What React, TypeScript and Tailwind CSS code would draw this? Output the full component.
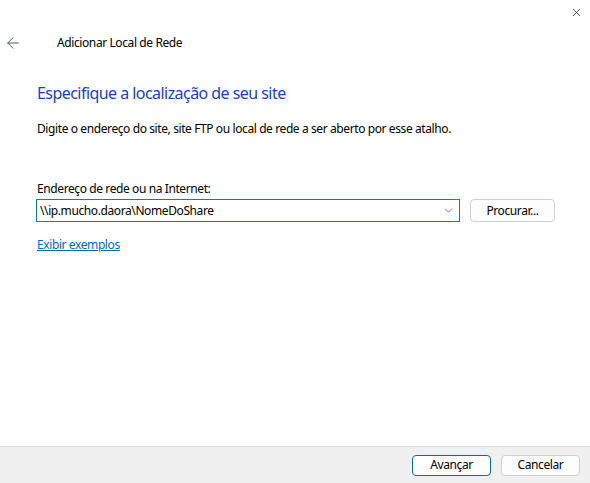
import { ArrowLeft, ChevronDown, X } from "lucide-react";

export default function App() {
  return (
    <div
      className="w-[590px] h-[483px] bg-white flex flex-col text-[12px] tracking-[-0.4px] text-black overflow-hidden"
      style={{ fontFamily: '"Noto Sans", "Open Sans", sans-serif' }}
    >
      {/* title bar */}
      <div className="h-[25px] flex justify-end items-start pt-[6px] pr-[7px]">
        <X size={13} strokeWidth={1.2} className="text-black" />
      </div>

      {/* header with back arrow */}
      <div className="h-[36px] flex items-center">
        <ArrowLeft size={18} strokeWidth={1.3} className="ml-[4px] text-gray-600" />
        <span className="ml-[35px] leading-none">Adicionar Local de Rede</span>
      </div>

      <div className="flex-1 flex flex-col pl-[37px]">
        <h1 className="mt-[21px] text-[16px] tracking-[-0.55px] leading-[22px] text-[#1c3fb7]">
          Especifique a localização de seu site
        </h1>
        <p className="mt-[17px] leading-[16px]">
          Digite o endereço do site, site FTP ou local de rede a ser aberto por esse atalho.
        </p>

        <label className="mt-[44px] leading-[16px]">Endereço de rede ou na Internet:</label>
        <div className="mt-[2px] flex items-center gap-[10px]">
          <div className="w-[424px] h-[23px] -ml-[1px] border border-[#0078d4] flex items-center pl-[3px] pr-[4px]">
            <span className="flex-1 leading-none">\\ip.mucho.daora\NomeDoShare</span>
            <ChevronDown size={13} strokeWidth={1.3} className="text-gray-700" />
          </div>
          <button className="w-[85px] h-[23px] border border-[#d0d0d0] rounded-[4px] bg-[#fdfdfd] leading-none">
            Procurar...
          </button>
        </div>

        <a className="mt-[15px] self-start text-[#0066cc] underline leading-[16px]">Exibir exemplos</a>
      </div>

      {/* footer */}
      <div className="h-[37px] bg-[#f0f0f0] border-t border-[#dfdfdf] flex items-center justify-end gap-[10px] pr-[10px]">
        <button className="w-[79px] h-[21px] border border-[#0067c0] rounded-[4px] bg-white leading-none">
          Avançar
        </button>
        <button className="w-[79px] h-[21px] border border-[#d0d0d0] rounded-[4px] bg-[#fdfdfd] leading-none">
          Cancelar
        </button>
      </div>
    </div>
  );
}
